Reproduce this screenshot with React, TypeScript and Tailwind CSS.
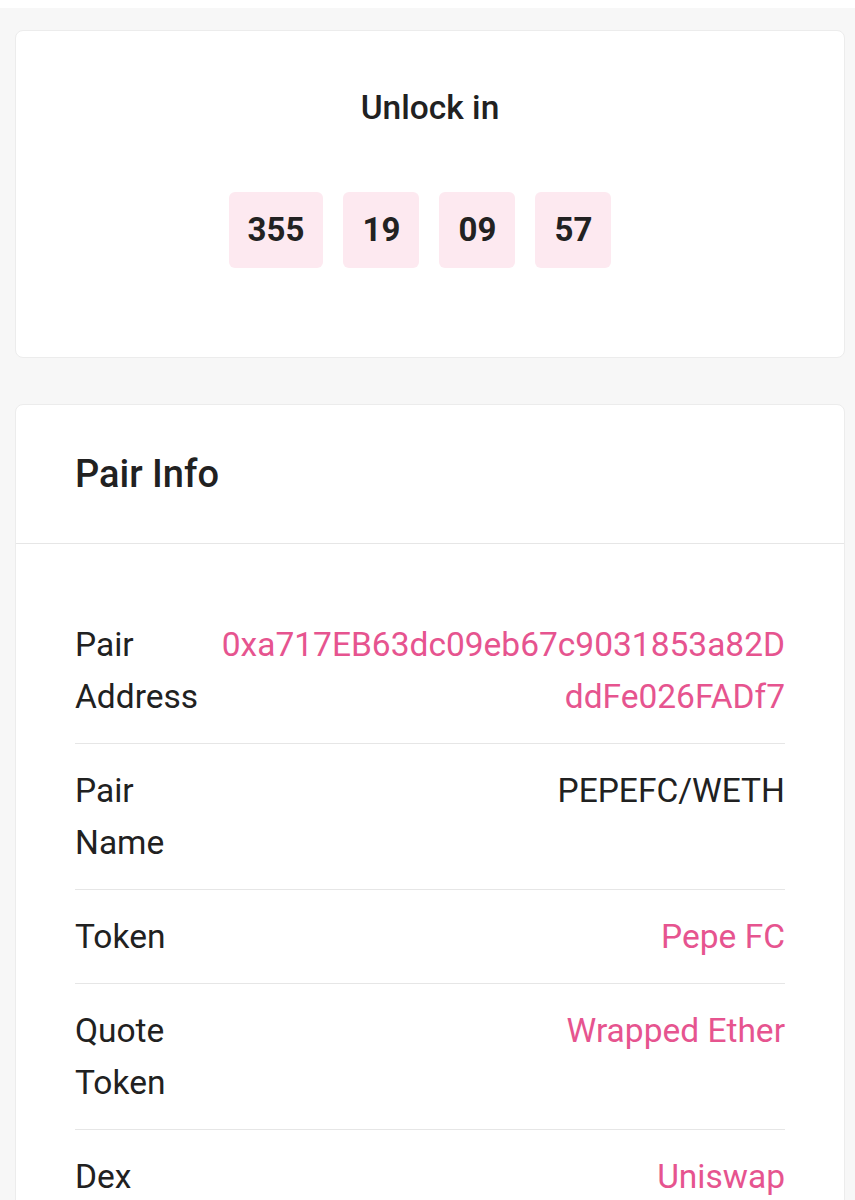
import React from 'react';

const rows: { label: string; value: string; link?: boolean }[] = [
  { label: 'Pair Address', value: '0xa717EB63dc09eb67c9031853a82DddFe026FADf7', link: true },
  { label: 'Pair Name', value: 'PEPEFC/WETH' },
  { label: 'Token', value: 'Pepe FC', link: true },
  { label: 'Quote Token', value: 'Wrapped Ether', link: true },
  { label: 'Dex', value: 'Uniswap', link: true },
];

const countdown = ['355', '19', '09', '57'];

export default function App() {
  return (
    <div
      className="h-screen overflow-hidden bg-[#f7f7f7] text-[#212121]"
      style={{ fontFamily: 'Roboto, "Liberation Sans", sans-serif' }}
    >
      <div className="h-2 bg-white" />
      <div className="pl-[15px] pr-[10px] pt-[22px] pb-10 flex flex-col gap-[46px]">
        <div className="bg-white rounded-lg border border-[#ececec] pt-[57px] pb-[89px] flex flex-col items-center">
          <h2 className="text-[33.5px] leading-[40px] font-medium">Unlock in</h2>
          <div className="mt-[64px] flex">
            {countdown.map((n, i) => (
              <div
                key={i}
                className="mr-5 min-w-[76px] h-[76px] px-[19px] rounded-md bg-[#fde9f0] flex items-center justify-center text-[33px] font-bold text-[#222]"
              >
                {n}
              </div>
            ))}
          </div>
        </div>

        <div className="bg-white rounded-lg border border-[#ececec] overflow-hidden">
          <div className="h-[139px] px-[59px] flex items-center border-b border-[#e6e6e6]">
            <h3 className="text-[38px] font-medium">Pair Info</h3>
          </div>
          <div className="px-[59px] pt-[54px]">
            {rows.map((r, i) => (
              <div
                key={r.label}
                className={
                  'flex justify-between gap-[18px] py-[20.5px] text-[33.5px] leading-[52px] ' +
                  (i < rows.length - 1 ? 'border-b border-[#e6e6e6]' : '')
                }
              >
                <div className="w-[128px] shrink-0">{r.label}</div>
                <div
                  className={
                    'flex-1 text-right break-all ' + (r.link ? 'text-[#e6548f]' : 'text-[#212121]')
                  }
                >
                  {r.value}
                </div>
              </div>
            ))}
          </div>
        </div>
      </div>
    </div>
  );
}
